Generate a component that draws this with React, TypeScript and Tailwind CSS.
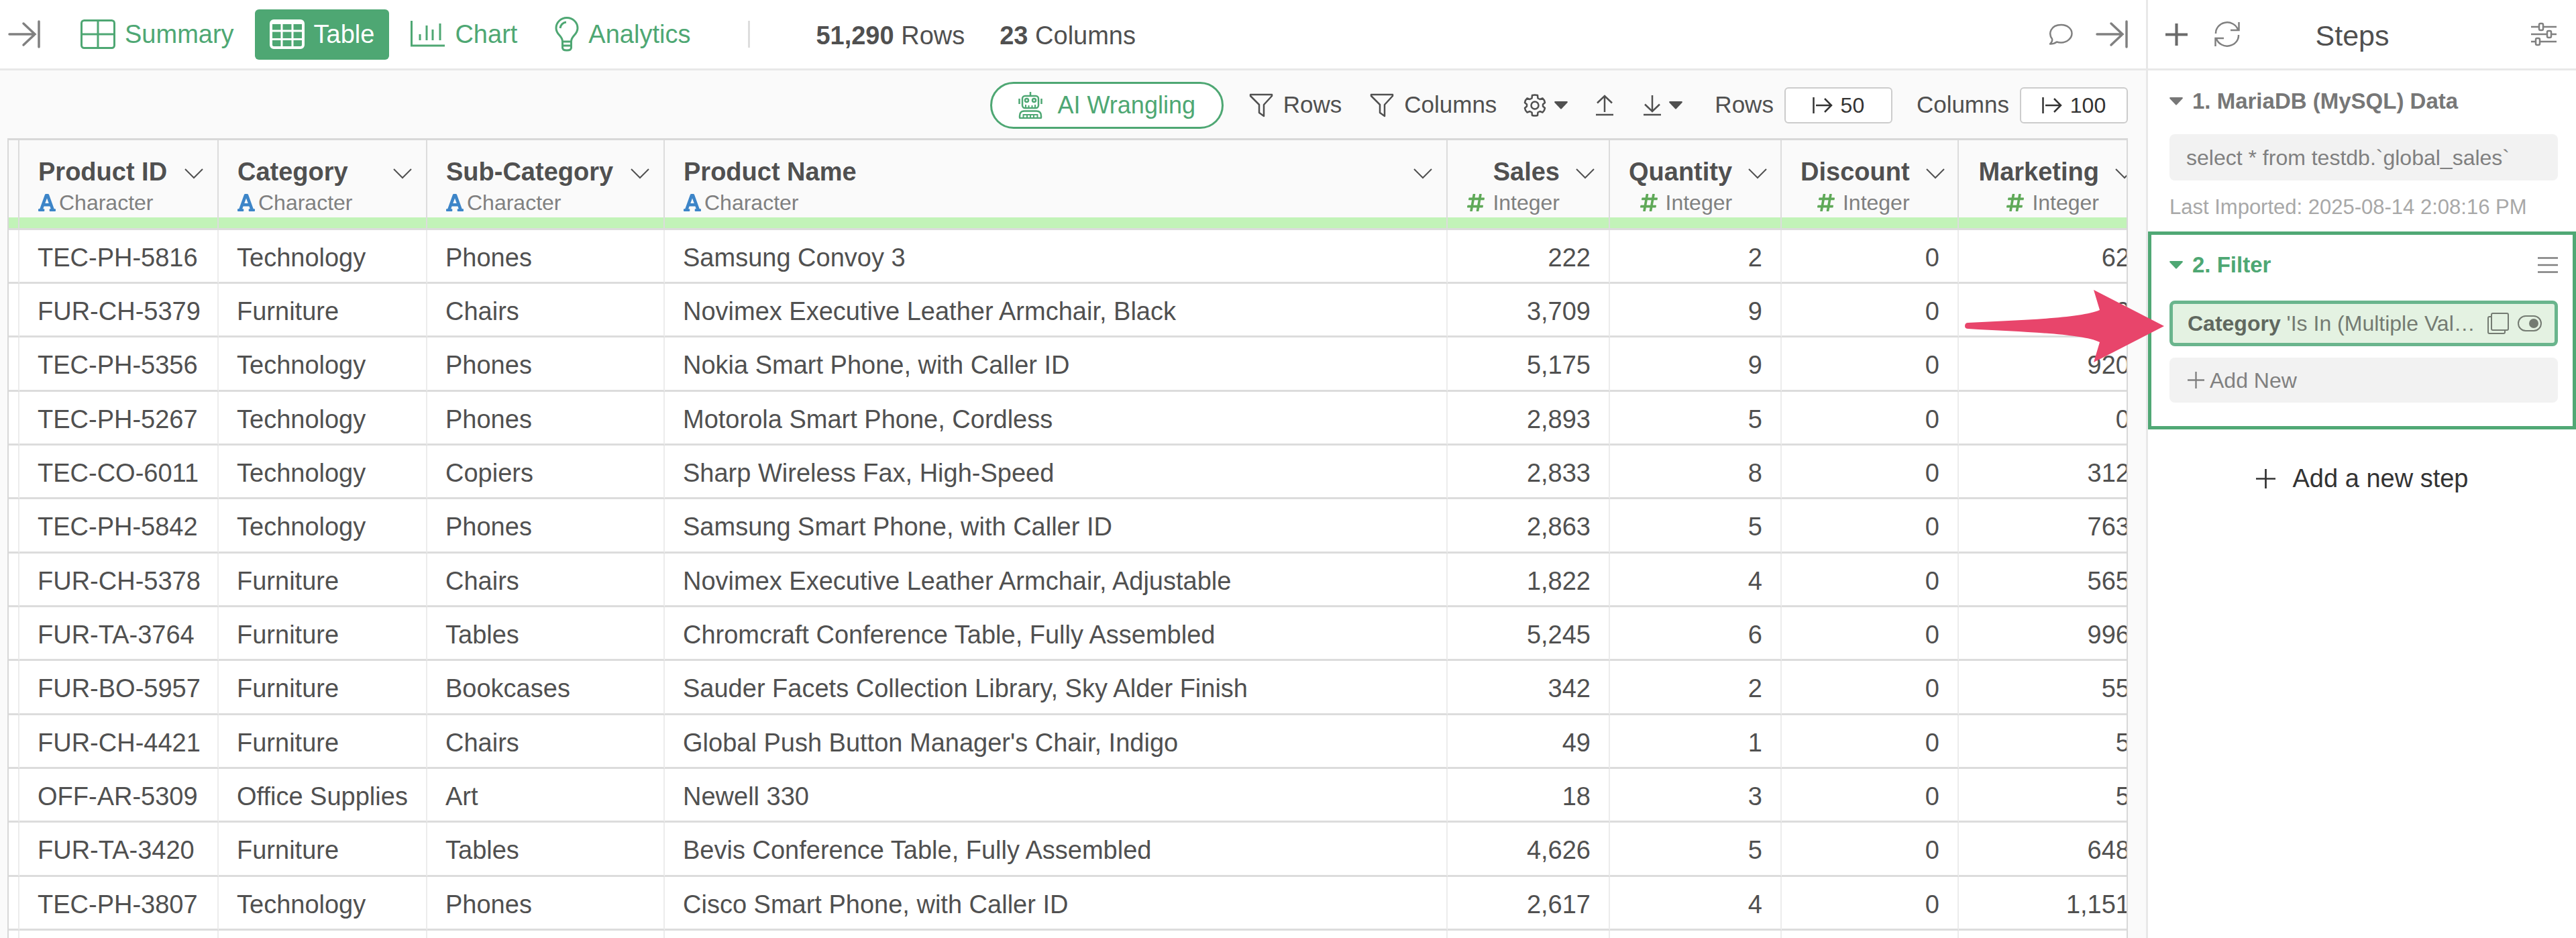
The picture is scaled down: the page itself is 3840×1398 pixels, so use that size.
import { FaFont, FaHashtag } from "react-icons/fa";

type IconProps = { className?: string };

const stroke = { fill: "none", stroke: "currentColor" } as const;

function CollapseIcon({ className }: IconProps) {
  return (
    <svg className={className} viewBox="0 0 48 42" {...stroke} strokeWidth="3.500" strokeLinecap="round" aria-hidden="true">
      <path d="M2 21H40M23 5L40 21L23 37M46 2V40" />
    </svg>
  );
}

function SummaryIcon({ className }: IconProps) {
  return (
    <svg className={className} viewBox="0 0 52 44" {...stroke} strokeWidth="3" aria-hidden="true">
      <rect x="1.5" y="1.5" width="49" height="41" rx="4" />
      <path d="M26 1V43M1 22H51" />
    </svg>
  );
}

function TableIcon({ className }: IconProps) {
  return (
    <svg className={className} viewBox="0 0 52 44" {...stroke} strokeWidth="4" aria-hidden="true">
      <rect x="2" y="2" width="48" height="40" rx="4" />
      <path d="M2 5H50" />
      <path d="M18 2V42M34 2V42M2 17H50M2 29.500H50" strokeWidth="3" />
    </svg>
  );
}

function ChartIcon({ className }: IconProps) {
  return (
    <svg className={className} viewBox="0 0 52 40" {...stroke} strokeWidth="3" aria-hidden="true">
      <path d="M1.500 0V37H51" />
      <path d="M14 20V29M24 7V29M33 13V29M44 4V29" />
    </svg>
  );
}

function BulbIcon({ className }: IconProps) {
  return (
    <svg className={className} viewBox="0 0 36 52" {...stroke} strokeWidth="3" aria-hidden="true">
      <path d="M11.500 37C11.500 28 2 27 2 17A16 15.500 0 0 1 34 17C34 27 24.500 28 24.500 37Z" />
      <path d="M8 17A10 10 0 0 1 17 8" />
      <path d="M11.500 37V46Q11.500 50 18 50Q24.500 50 24.500 46V37M11.500 43H24.500" />
    </svg>
  );
}

function ChatIcon({ className }: IconProps) {
  return (
    <svg className={className} viewBox="0 0 36 32" {...stroke} strokeWidth="2.500" strokeLinejoin="round" aria-hidden="true">
      <path d="M12 27.500Q8 30.500 2 30.500Q6 27 5 23C-1 15 3 2 18.500 2C28 2 34.500 8 34.500 15C34.500 22 27 28.500 18.500 28.500Q15 28.500 12 27.500Z" />
    </svg>
  );
}

function PlusIcon({ className }: IconProps) {
  return (
    <svg className={className} viewBox="0 0 32 32" {...stroke} strokeWidth="3" aria-hidden="true">
      <path d="M16 0V32M0 16H32" />
    </svg>
  );
}

function BoldPlusIcon({ className }: IconProps) {
  return (
    <svg className={className} viewBox="0 0 32 32" {...stroke} strokeWidth="4" aria-hidden="true">
      <path d="M16 0V32M0 16H32" />
    </svg>
  );
}

function RefreshIcon({ className }: IconProps) {
  return (
    <svg className={className} viewBox="0 0 38 38" {...stroke} strokeWidth="2.500" aria-hidden="true">
      <path d="M2 18A17 16 0 0 1 35 12M36.500 1V13H24" />
      <path d="M36 20A17 16 0 0 1 3 26M1.500 37V25H14" />
    </svg>
  );
}

function SlidersIcon({ className }: IconProps) {
  return (
    <svg className={className} viewBox="0 0 38 36" {...stroke} strokeWidth="2.500" aria-hidden="true">
      <path d="M0 7H12M18 7H38M0 18H24M30 18H38M0 29H7M13 29H38" />
      <rect x="12" y="2" width="6" height="10" rx="2" />
      <rect x="24" y="13" width="6" height="10" rx="2" />
      <rect x="7" y="24" width="6" height="10" rx="2" />
    </svg>
  );
}

function RobotIcon({ className }: IconProps) {
  return (
    <svg className={className} viewBox="0 0 36 40" {...stroke} strokeWidth="2.500" aria-hidden="true">
      <path d="M18 0V6M1.500 10V18M34.500 10V18" />
      <rect x="6" y="6" width="24" height="18" rx="4" />
      <circle cx="12.500" cy="12.500" r="2.500" />
      <circle cx="23.500" cy="12.500" r="2.500" />
      <path d="M11 24V19M15.500 24V20M20.500 24V20M25 24V19" strokeWidth="2" />
      <path d="M2 38V36Q2 28.500 9 28.500H27Q34 28.500 34 36V38Q34 39 33 39H3Q2 39 2 38Z" />
      <path d="M7.500 39V34H28.500V39M13 39V35M18 39V35M23 39V35" strokeWidth="2" />
    </svg>
  );
}

function FilterIcon({ className }: IconProps) {
  return (
    <svg className={className} viewBox="0 0 36 36" {...stroke} strokeWidth="2.500" strokeLinejoin="round" aria-hidden="true">
      <path d="M2 2H34V4L22 17V34L15 29V17L2 4Z" />
    </svg>
  );
}

function GearIcon({ className }: IconProps) {
  return (
    <svg className={className} viewBox="0 0 34 34" {...stroke} strokeWidth="2.500" strokeLinejoin="round" aria-hidden="true">
      <path d="M13 2Q17 1 21 2L21.500 6.500L24.500 8L28.500 6.500Q31.500 9 32 13L29 15.500V18.500L32 21Q31.500 25 28.500 27.500L24.500 26L21.500 27.500L21 32Q17 33 13 32L12.500 27.500L9.500 26L5.500 27.500Q2.500 25 2 21L5 18.500V15.500L2 13Q2.500 9 5.500 6.500L9.500 8L12.500 6.500Z" />
      <circle cx="17" cy="17" r="5.500" />
    </svg>
  );
}

function CaretIcon({ className }: IconProps) {
  return (
    <svg className={className} viewBox="0 0 20 12" fill="currentColor" aria-hidden="true">
      <path d="M1 0H19Q20.500 0.500 19.500 2L11 11Q10 12 9 11L0.500 2Q-0.500 0.500 1 0Z" />
    </svg>
  );
}

function UploadIcon({ className }: IconProps) {
  return (
    <svg className={className} viewBox="0 0 26 32" {...stroke} strokeWidth="2.500" aria-hidden="true">
      <path d="M13 26V2M2 12.500L13 2L24 12.500M0 30H26" />
    </svg>
  );
}

function DownloadIcon({ className }: IconProps) {
  return (
    <svg className={className} viewBox="0 0 26 32" {...stroke} strokeWidth="2.500" aria-hidden="true">
      <path d="M13 1V25M2 14.500L13 25L24 14.500M0 30H26" />
    </svg>
  );
}

function LimitIcon({ className }: IconProps) {
  return (
    <svg className={className} viewBox="0 0 30 24" {...stroke} strokeWidth="2.500" aria-hidden="true">
      <path d="M1.500 0V24M5 12H28M18 2L28 12L18 22" />
    </svg>
  );
}

function ChevronIcon({ className }: IconProps) {
  return (
    <svg className={className} viewBox="0 0 28 16" {...stroke} strokeWidth="2" aria-hidden="true">
      <path d="M1 1L14 14L27 1" />
    </svg>
  );
}

function MenuIcon({ className }: IconProps) {
  return (
    <svg className={className} viewBox="0 0 30 24" {...stroke} strokeWidth="2.500" aria-hidden="true">
      <path d="M0 1.500H30M0 12H30M0 22.500H30" />
    </svg>
  );
}

function CopyIcon({ className }: IconProps) {
  return (
    <svg className={className} viewBox="0 0 34 34" {...stroke} strokeWidth="2" aria-hidden="true">
      <rect x="7" y="2" width="25" height="25" rx="2" />
      <path d="M7 7H4Q2 7 2 9V30Q2 32 4 32H25Q27 32 27 30V27" />
    </svg>
  );
}

function ToggleIcon({ className }: IconProps) {
  return (
    <svg className={className} viewBox="0 0 36 26" {...stroke} strokeWidth="2" aria-hidden="true">
      <rect x="1" y="2" width="34" height="22" rx="11" />
      <circle cx="24" cy="13" r="7" fill="currentColor" stroke="none" />
    </svg>
  );
}

type Column = { name: string; numeric: boolean; width: string };

const columns: Column[] = [
  { name: "Product ID", numeric: false, width: "w-[297px]" },
  { name: "Category", numeric: false, width: "w-[311px]" },
  { name: "Sub-Category", numeric: false, width: "w-[354px]" },
  { name: "Product Name", numeric: false, width: "" },
  { name: "Sales", numeric: true, width: "w-[242px]" },
  { name: "Quantity", numeric: true, width: "w-[256px]" },
  { name: "Discount", numeric: true, width: "w-[264px]" },
  { name: "Marketing", numeric: true, width: "w-[284px]" },
];

const rows: string[][] = [
  ["TEC-PH-5816", "Technology", "Phones", "Samsung Convoy 3", "222", "2", "0", "62"],
  ["FUR-CH-5379", "Furniture", "Chairs", "Novimex Executive Leather Armchair, Black", "3,709", "9", "0", "0"],
  ["TEC-PH-5356", "Technology", "Phones", "Nokia Smart Phone, with Caller ID", "5,175", "9", "0", "920"],
  ["TEC-PH-5267", "Technology", "Phones", "Motorola Smart Phone, Cordless", "2,893", "5", "0", "0"],
  ["TEC-CO-6011", "Technology", "Copiers", "Sharp Wireless Fax, High-Speed", "2,833", "8", "0", "312"],
  ["TEC-PH-5842", "Technology", "Phones", "Samsung Smart Phone, with Caller ID", "2,863", "5", "0", "763"],
  ["FUR-CH-5378", "Furniture", "Chairs", "Novimex Executive Leather Armchair, Adjustable", "1,822", "4", "0", "565"],
  ["FUR-TA-3764", "Furniture", "Tables", "Chromcraft Conference Table, Fully Assembled", "5,245", "6", "0", "996"],
  ["FUR-BO-5957", "Furniture", "Bookcases", "Sauder Facets Collection Library, Sky Alder Finish", "342", "2", "0", "55"],
  ["FUR-CH-4421", "Furniture", "Chairs", "Global Push Button Manager's Chair, Indigo", "49", "1", "0", "5"],
  ["OFF-AR-5309", "Office Supplies", "Art", "Newell 330", "18", "3", "0", "5"],
  ["FUR-TA-3420", "Furniture", "Tables", "Bevis Conference Table, Fully Assembled", "4,626", "5", "0", "648"],
  ["TEC-PH-3807", "Technology", "Phones", "Cisco Smart Phone, with Caller ID", "2,617", "4", "0", "1,151"],
  ["", "", "", "", "", "", "", ""],
];

function TopBar() {
  return (
    <header className="flex h-[105px] shrink-0 items-center border-b-3 border-[#e8e8e8] bg-white pr-[27px] pl-[12px] text-[38px] text-[#4ea773]">
      <button type="button" aria-label="Expand" className="mr-[60px] text-[#808080]">
        <CollapseIcon className="h-[42px] w-[48px]" />
      </button>
      <nav className="flex items-center">
        <button type="button" className="flex items-center gap-[14px] pr-[31px]">
          <SummaryIcon className="h-[44px] w-[52px]" />
          Summary
        </button>
        <button type="button" className="flex h-[75px] items-center gap-[14px] rounded-md bg-[#4ea773] px-[22px] text-white">
          <TableIcon className="h-[44px] w-[52px]" />
          Table
        </button>
        <button type="button" className="flex items-center gap-[14px] pl-[32px]">
          <ChartIcon className="h-[40px] w-[52px]" />
          Chart
        </button>
        <button type="button" className="flex items-center gap-[14px] pl-[56px]">
          <BulbIcon className="h-[52px] w-[36px]" />
          Analytics
        </button>
      </nav>
      <div className="ml-[86px] h-[40px] w-[3px] bg-[#dddddd]" />
      <p className="ml-[98px] pt-[4px] text-[#505050]">
        <b>51,290</b> Rows
      </p>
      <p className="ml-[52px] pt-[4px] text-[#505050]">
        <b>23</b> Columns
      </p>
      <div className="ml-auto flex items-center gap-[34px] text-[#808080]">
        <button type="button" aria-label="Comments">
          <ChatIcon className="h-[32px] w-[36px]" />
        </button>
        <button type="button" aria-label="Collapse steps">
          <CollapseIcon className="h-[42px] w-[48px]" />
        </button>
      </div>
    </header>
  );
}

function LimitButton({ label, value }: { label: string; value: string }) {
  return (
    <div className="flex items-center gap-4">
      <span>{label}</span>
      <button
        type="button"
        aria-label={`${label} ${value}`}
        className="flex h-[54px] w-[161px] items-center justify-center gap-3 rounded-md border-2 border-[#cccccc] bg-white text-[32px] text-[#333333]"
      >
        <LimitIcon className="h-[24px] w-[30px]" />
        {value}
      </button>
    </div>
  );
}

function Toolbar() {
  return (
    <div className="flex h-[101px] shrink-0 items-center justify-end pt-[2px] pr-[27px] text-[35px] text-[#505050]">
      <button
        type="button"
        className="mr-[38px] flex h-[70px] w-[348px] items-center justify-center gap-[23px] rounded-full border-3 border-[#4ea773] bg-white text-[36px] text-[#4ea773]"
      >
        <RobotIcon className="h-[40px] w-[36px]" />
        AI Wrangling
      </button>
      <button type="button" className="mr-[42px] flex items-center gap-[15px]">
        <FilterIcon className="h-[36px] w-[36px]" />
        Rows
      </button>
      <button type="button" className="mr-[40px] flex items-center gap-[15px]">
        <FilterIcon className="h-[36px] w-[36px]" />
        Columns
      </button>
      <button type="button" aria-label="Settings" className="mr-[42px] flex items-center gap-3">
        <GearIcon className="h-[34px] w-[34px]" />
        <CaretIcon className="h-[12px] w-[20px]" />
      </button>
      <button type="button" aria-label="Upload" className="mr-[45px]">
        <UploadIcon className="h-[32px] w-[26px]" />
      </button>
      <button type="button" aria-label="Download" className="mr-[48px] flex items-center gap-3">
        <DownloadIcon className="h-[32px] w-[26px]" />
        <CaretIcon className="h-[12px] w-[20px]" />
      </button>
      <div className="flex gap-9">
        <LimitButton label="Rows" value="50" />
        <LimitButton label="Columns" value="100" />
      </div>
    </div>
  );
}

function HeaderCell({ column }: { column: Column }) {
  return (
    <th
      scope="col"
      className={`${column.width} border-r-2 border-b-3 border-[#dcdcdc] p-0 text-left align-top font-normal`}
    >
      <div className="flex h-[115px] items-start justify-between pt-[25px] pr-[21px] pl-[28px]">
        <div className={column.numeric ? "flex flex-1 flex-col items-end" : "flex flex-col items-start"}>
          <span className="text-[38px] leading-[44px] font-bold whitespace-nowrap">{column.name}</span>
          <span className="flex items-center gap-[5px] text-[32px] leading-[48px] text-[#808080]">
            {column.numeric ? (
              <FaHashtag className="mr-[7px] h-[30px] w-[26px] text-[#5fa958]" />
            ) : (
              <FaFont className="h-[30px] w-[26px] text-[#3d85c8]" />
            )}
            {column.numeric ? "Integer" : "Character"}
          </span>
        </div>
        <button type="button" aria-label={`${column.name} menu`} className="mt-[17px] ml-[24px]">
          <ChevronIcon className="h-[16px] w-[28px]" />
        </button>
      </div>
      <div className="h-[16px] bg-[#c2f3b8]" />
    </th>
  );
}

function DataTable() {
  return (
    <div className="mr-[27px] ml-[11px] min-h-0 flex-1 overflow-hidden border-t-3 border-r-2 border-l-2 border-[#d8d8d8]">
      <table className="w-[calc(100%+34px)] table-fixed border-separate border-spacing-0 text-[#505050]">
        <thead>
          <tr className="bg-[#fafafa]">
            <th aria-label="Row" className="w-[16px] border-r-2 border-b-3 border-[#dcdcdc] p-0 align-bottom">
              <div className="h-[16px] bg-[#c2f3b8]" />
            </th>
            {columns.map((column) => (
              <HeaderCell key={column.name} column={column} />
            ))}
          </tr>
        </thead>
        <tbody className="bg-white text-[38px] leading-[44px]">
          {rows.map((row, i) => (
            <tr key={i} className="h-[80px] nth-[3n]:h-[81px]">
              <td className="border-r-2 border-b-3 border-r-[#ececec] border-b-[#dcdcdc] p-0" />
              {row.map((value, j) => (
                <td
                  key={columns[j].name}
                  className={`border-r-2 border-b-3 border-r-[#ececec] border-b-[#dcdcdc] px-[27px] pt-[4px] pb-0 whitespace-nowrap ${
                    columns[j].numeric ? "text-right" : "text-left"
                  }`}
                >
                  {value}
                </td>
              ))}
            </tr>
          ))}
        </tbody>
      </table>
    </div>
  );
}

function StepsPanel() {
  return (
    <aside className="flex w-[641px] shrink-0 flex-col border-l-3 border-[#e8e8e8] bg-white text-[32px] text-[#808080]">
      <div className="flex h-[105px] items-center border-b-3 border-[#e8e8e8] pr-[29px] pl-[26px]">
        <div className="flex flex-1 items-center gap-[40px]">
          <button type="button" aria-label="Add step" className="text-[#6a6a6a]">
            <BoldPlusIcon className="size-[33px]" />
          </button>
          <button type="button" aria-label="Refresh">
            <RefreshIcon className="size-[38px]" />
          </button>
        </div>
        <h2 className="mr-[26px] pt-[4px] text-[43px] text-[#505050]">Steps</h2>
        <div className="flex flex-1 justify-end">
          <button type="button" aria-label="Step settings">
            <SlidersIcon className="h-[36px] w-[38px]" />
          </button>
        </div>
      </div>

      <section className="pt-[24px] pr-[27px] pb-[16px] pl-[32px]">
        <h3 className="flex h-[44px] items-center gap-[14px] text-[33px] font-bold text-[#777777]">
          <CaretIcon className="h-[12px] w-[20px]" />
          1. MariaDB (MySQL) Data
        </h3>
        <p className="mt-[27px] flex h-[69px] items-center rounded-lg bg-[#f2f2f2] px-[25px]">
          select * from testdb.`global_sales`
        </p>
        <p className="mt-[20px] text-[31px] leading-[40px] text-[#a8a8a8]">Last Imported: 2025-08-14 2:08:16 PM</p>
      </section>

      <section className="flex flex-col gap-[17px] border-5 border-[#50a875] pt-[23px] pr-[22px] pb-[35px] pl-[27px]">
        <div className="mb-[14px] flex h-[44px] items-center justify-between">
          <h3 className="flex items-center gap-[14px] text-[33px] font-bold text-[#4ea773]">
            <CaretIcon className="h-[12px] w-[20px]" />
            2. Filter
          </h3>
          <button type="button" aria-label="Step menu">
            <MenuIcon className="h-[24px] w-[30px]" />
          </button>
        </div>
        <div className="flex h-[68px] items-center justify-between rounded-lg border-5 border-[#6ab58d] bg-[#e4f2e2] pr-[19px] pl-[22px] text-[#747b72]">
          <p className="whitespace-nowrap">
            <b className="text-[#60685f]">Category</b> &#39;Is In (Multiple Val…
          </p>
          <div className="flex items-center gap-[12px]">
            <button type="button" aria-label="Copy">
              <CopyIcon className="size-[34px]" />
            </button>
            <button type="button" aria-label="Enable">
              <ToggleIcon className="h-[26px] w-[36px]" />
            </button>
          </div>
        </div>
        <button type="button" className="flex h-[67px] items-center gap-2 rounded-lg bg-[#f2f2f2] px-[27px]">
          <PlusIcon className="size-[25px]" />
          Add New
        </button>
      </section>

      <button type="button" className="mx-auto mt-[45px] flex items-center gap-[26px] text-[38px] text-[#333333]">
        <PlusIcon className="size-[29px]" />
        Add a new step
      </button>
    </aside>
  );
}

export default function App() {
  return (
    <div className="relative flex h-screen overflow-hidden bg-[#fafafa] font-['Liberation_Sans',Arial,sans-serif]">
      <main className="flex min-w-0 flex-1 flex-col">
        <TopBar />
        <Toolbar />
        <DataTable />
      </main>
      <StepsPanel />
      <svg
        className="absolute top-[432px] right-[614px] h-[108px] w-[298px]"
        viewBox="0 0 298 108"
        fill="#e8456b"
        aria-hidden="true"
      >
        <path d="M6 49C90 45 175 42 202 30L193 0L298 54L193 108L202 78C175 65 90 63 6 58Q1 58 1 54Q1 49 6 49Z" />
      </svg>
    </div>
  );
}
